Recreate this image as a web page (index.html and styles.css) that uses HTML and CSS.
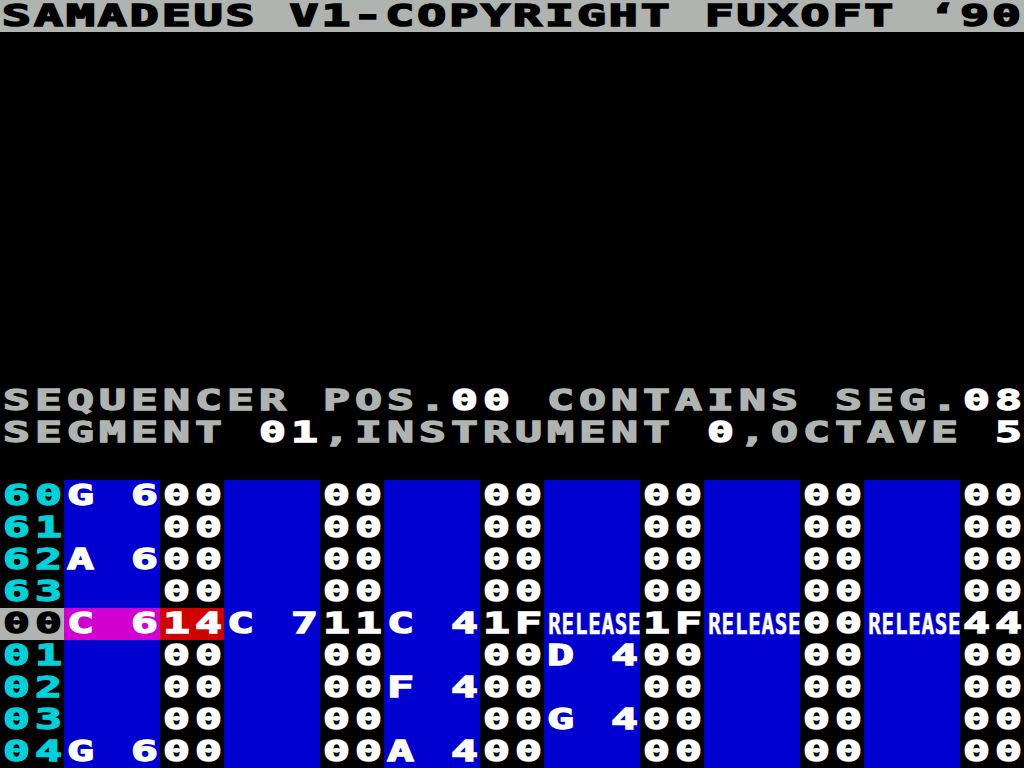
FILE: index.html
```html
<!DOCTYPE html>
<html>
<head>
<meta charset="utf-8">
<link rel="stylesheet" href="styles.css">
</head>
<body>
<div class="screen">
  <div class="title"><span class="t tt">SAMADEUS V1-COPYRIGHT FUXOFT ‘90</span></div>
  <div class="blank"></div>
  <div class="info"><span class="t">SEQUENCER POS.<b>00</b> CONTAINS SEG.<b>08</b></span></div>
  <div class="info"><span class="t">SEGMENT <b>01</b>,INSTRUMENT <b>0</b>,OCTAVE <b>5</b></span></div>
  <div class="gap"></div>
  <div class="pattern">
    <div class="row">
      <div class="c2 num"><span class="t">60</span></div>
      <div class="c3 note"><span class="t">G 6</span></div><div class="c2 vol"><span class="t">00</span></div>
      <div class="c3 note"></div><div class="c2 vol"><span class="t">00</span></div>
      <div class="c3 note"></div><div class="c2 vol"><span class="t">00</span></div>
      <div class="c3 note"></div><div class="c2 vol"><span class="t">00</span></div>
      <div class="c3 note"></div><div class="c2 vol"><span class="t">00</span></div>
      <div class="c3 note"></div><div class="c2 vol"><span class="t">00</span></div>
    </div>
    <div class="row">
      <div class="c2 num"><span class="t">61</span></div>
      <div class="c3 note"></div><div class="c2 vol"><span class="t">00</span></div>
      <div class="c3 note"></div><div class="c2 vol"><span class="t">00</span></div>
      <div class="c3 note"></div><div class="c2 vol"><span class="t">00</span></div>
      <div class="c3 note"></div><div class="c2 vol"><span class="t">00</span></div>
      <div class="c3 note"></div><div class="c2 vol"><span class="t">00</span></div>
      <div class="c3 note"></div><div class="c2 vol"><span class="t">00</span></div>
    </div>
    <div class="row">
      <div class="c2 num"><span class="t">62</span></div>
      <div class="c3 note"><span class="t">A 6</span></div><div class="c2 vol"><span class="t">00</span></div>
      <div class="c3 note"></div><div class="c2 vol"><span class="t">00</span></div>
      <div class="c3 note"></div><div class="c2 vol"><span class="t">00</span></div>
      <div class="c3 note"></div><div class="c2 vol"><span class="t">00</span></div>
      <div class="c3 note"></div><div class="c2 vol"><span class="t">00</span></div>
      <div class="c3 note"></div><div class="c2 vol"><span class="t">00</span></div>
    </div>
    <div class="row">
      <div class="c2 num"><span class="t">63</span></div>
      <div class="c3 note"></div><div class="c2 vol"><span class="t">00</span></div>
      <div class="c3 note"></div><div class="c2 vol"><span class="t">00</span></div>
      <div class="c3 note"></div><div class="c2 vol"><span class="t">00</span></div>
      <div class="c3 note"></div><div class="c2 vol"><span class="t">00</span></div>
      <div class="c3 note"></div><div class="c2 vol"><span class="t">00</span></div>
      <div class="c3 note"></div><div class="c2 vol"><span class="t">00</span></div>
    </div>
    <div class="row current">
      <div class="c2 num"><span class="t">00</span></div>
      <div class="c3 note hl-note"><span class="t">C 6</span></div><div class="c2 vol hl-vol"><span class="t">14</span></div>
      <div class="c3 note"><span class="t">C 7</span></div><div class="c2 vol"><span class="t">11</span></div>
      <div class="c3 note"><span class="t">C 4</span></div><div class="c2 vol"><span class="t">1F</span></div>
      <div class="c3 note"><span class="rel">RELEASE</span></div><div class="c2 vol"><span class="t">1F</span></div>
      <div class="c3 note"><span class="rel">RELEASE</span></div><div class="c2 vol"><span class="t">00</span></div>
      <div class="c3 note"><span class="rel">RELEASE</span></div><div class="c2 vol"><span class="t">44</span></div>
    </div>
    <div class="row">
      <div class="c2 num"><span class="t">01</span></div>
      <div class="c3 note"></div><div class="c2 vol"><span class="t">00</span></div>
      <div class="c3 note"></div><div class="c2 vol"><span class="t">00</span></div>
      <div class="c3 note"></div><div class="c2 vol"><span class="t">00</span></div>
      <div class="c3 note"><span class="t">D 4</span></div><div class="c2 vol"><span class="t">00</span></div>
      <div class="c3 note"></div><div class="c2 vol"><span class="t">00</span></div>
      <div class="c3 note"></div><div class="c2 vol"><span class="t">00</span></div>
    </div>
    <div class="row">
      <div class="c2 num"><span class="t">02</span></div>
      <div class="c3 note"></div><div class="c2 vol"><span class="t">00</span></div>
      <div class="c3 note"></div><div class="c2 vol"><span class="t">00</span></div>
      <div class="c3 note"><span class="t">F 4</span></div><div class="c2 vol"><span class="t">00</span></div>
      <div class="c3 note"></div><div class="c2 vol"><span class="t">00</span></div>
      <div class="c3 note"></div><div class="c2 vol"><span class="t">00</span></div>
      <div class="c3 note"></div><div class="c2 vol"><span class="t">00</span></div>
    </div>
    <div class="row">
      <div class="c2 num"><span class="t">03</span></div>
      <div class="c3 note"></div><div class="c2 vol"><span class="t">00</span></div>
      <div class="c3 note"></div><div class="c2 vol"><span class="t">00</span></div>
      <div class="c3 note"></div><div class="c2 vol"><span class="t">00</span></div>
      <div class="c3 note"><span class="t">G 4</span></div><div class="c2 vol"><span class="t">00</span></div>
      <div class="c3 note"></div><div class="c2 vol"><span class="t">00</span></div>
      <div class="c3 note"></div><div class="c2 vol"><span class="t">00</span></div>
    </div>
    <div class="row">
      <div class="c2 num"><span class="t">04</span></div>
      <div class="c3 note"><span class="t">G 6</span></div><div class="c2 vol"><span class="t">00</span></div>
      <div class="c3 note"></div><div class="c2 vol"><span class="t">00</span></div>
      <div class="c3 note"><span class="t">A 4</span></div><div class="c2 vol"><span class="t">00</span></div>
      <div class="c3 note"></div><div class="c2 vol"><span class="t">00</span></div>
      <div class="c3 note"></div><div class="c2 vol"><span class="t">00</span></div>
      <div class="c3 note"></div><div class="c2 vol"><span class="t">00</span></div>
    </div>
  </div>
</div>
</body>
</html>
```
FILE: styles.css
```css
html, body {
  margin: 0;
  padding: 0;
  background: #000;
}
.screen {
  width: 1024px;
  height: 768px;
  overflow: hidden;
  background: #000;
  font-family: "DejaVu Sans Mono", "Liberation Mono", monospace;
  font-weight: bold;
  font-size: 28px;
  line-height: 32px;
  color: #ffffff;
}
.t {
  display: inline-block;
  white-space: pre;
  margin-left: 3px;
  letter-spacing: 3.14px;
  transform: scaleX(1.6);
  transform-origin: 0 0;
  -webkit-text-stroke: 1.3px currentColor;
}
.t b {
  font-weight: bold;
  color: #ffffff;
}
.title {
  height: 32px;
  background: #b0b4b0;
  color: #000;
  font-size: 30px;
}
.tt {
  margin-left: 2px;
  letter-spacing: 1.9px;
  transform: scaleX(1.6);
  -webkit-text-stroke: 1.6px currentColor;
}
.blank {
  height: 352px;
}
.info {
  height: 32px;
  color: #b0b4b0;
  padding-top: 1px;
  box-sizing: border-box;
}
.gap {
  height: 32px;
}
.pattern {
  display: flex;
  flex-direction: column;
}
.row {
  display: flex;
  height: 32px;
}
.c2, .c3 {
  height: 32px;
}
.c2 { width: 64px; }
.c3 { width: 96px; }
.num { color: #00d0d8; background: #000; }
.current .num { background: #b0b4b0; color: #000; }
.note { background: #0000d0; color: #fff; }
.vol { background: #000; color: #fff; }
.hl-note { background: #d000d0; }
.hl-vol { background: #d00000; }
.rel {
  display: inline-block;
  white-space: pre;
  letter-spacing: 1px;
  padding-left: 6px;
  font-size: 29px;
  transform: scaleX(0.72);
  transform-origin: 0 0;
  -webkit-text-stroke: 0.6px currentColor;
}
```
